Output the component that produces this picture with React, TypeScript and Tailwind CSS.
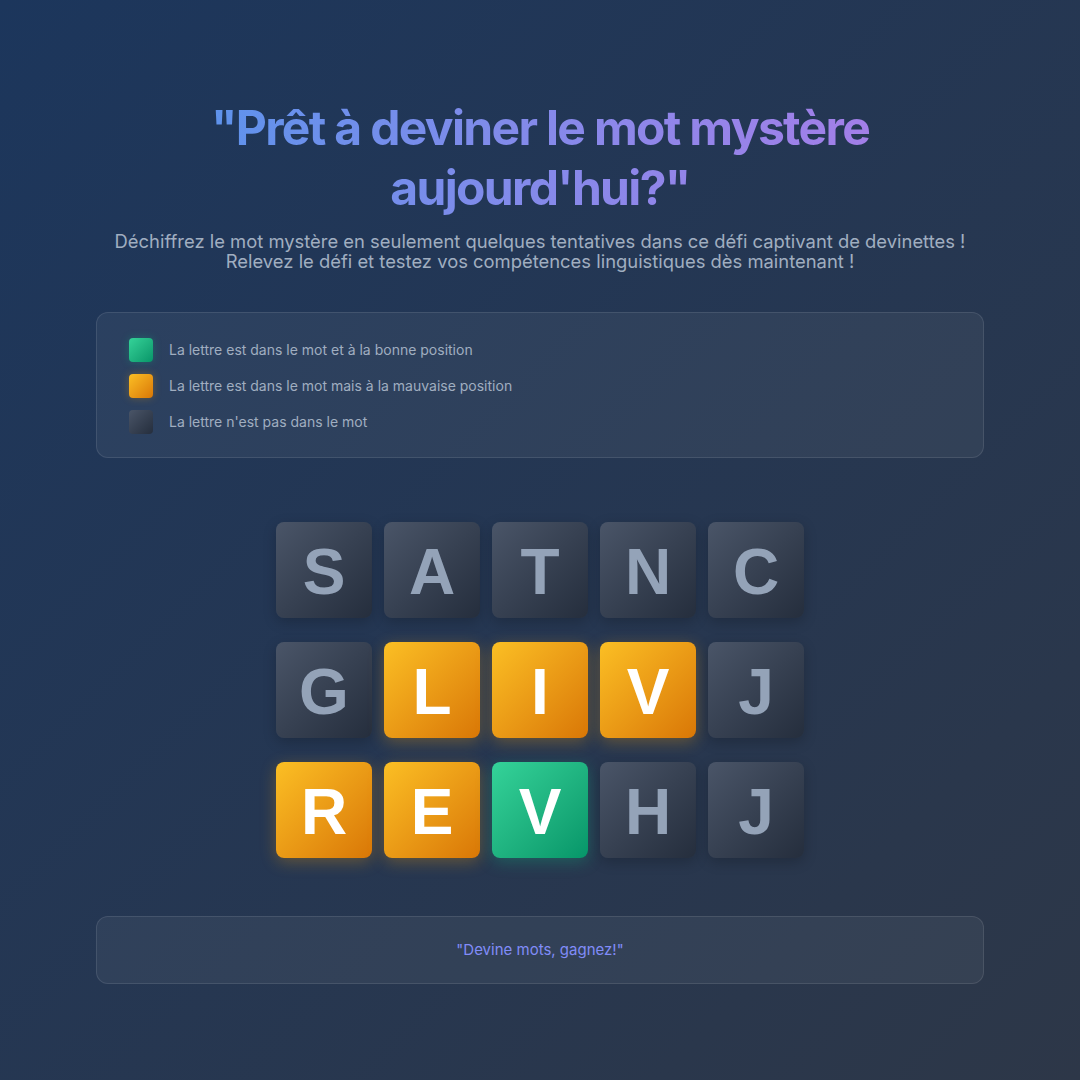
import React from "react";

type State = "correct" | "present" | "absent";

const ROWS: { letter: string; state: State }[][] = [
  [
    { letter: "S", state: "absent" },
    { letter: "A", state: "absent" },
    { letter: "T", state: "absent" },
    { letter: "N", state: "absent" },
    { letter: "C", state: "absent" },
  ],
  [
    { letter: "G", state: "absent" },
    { letter: "L", state: "present" },
    { letter: "I", state: "present" },
    { letter: "V", state: "present" },
    { letter: "J", state: "absent" },
  ],
  [
    { letter: "R", state: "present" },
    { letter: "E", state: "present" },
    { letter: "V", state: "correct" },
    { letter: "H", state: "absent" },
    { letter: "J", state: "absent" },
  ],
];

const tileStyles: Record<State, string> = {
  correct:
    "bg-gradient-to-br from-[#34d399] to-[#059669] text-white shadow-[0_4px_16px_rgba(16,185,129,0.3)]",
  present:
    "bg-gradient-to-br from-[#fbbf24] to-[#d97706] text-white shadow-[0_4px_16px_rgba(245,158,11,0.3)]",
  absent:
    "bg-gradient-to-br from-[#4a5568] to-[#252e3d] text-[#94a3b8] shadow-[0_4px_14px_rgba(0,0,0,0.2)]",
};

const LEGEND: { state: State; label: string }[] = [
  { state: "correct", label: "La lettre est dans le mot et à la bonne position" },
  { state: "present", label: "La lettre est dans le mot mais à la mauvaise position" },
  { state: "absent", label: "La lettre n'est pas dans le mot" },
];

const swatchStyles: Record<State, string> = {
  correct: "bg-gradient-to-br from-[#34d399] to-[#059669] shadow-[0_0_8px_rgba(16,185,129,0.3)]",
  present: "bg-gradient-to-br from-[#fbbf24] to-[#d97706] shadow-[0_0_8px_rgba(245,158,11,0.3)]",
  absent: "bg-gradient-to-br from-[#4a5568] to-[#252e3d]",
};

export default function App() {
  return (
    <div
      className="min-h-[1080px] w-full bg-gradient-to-br from-[#1c365c] to-[#2d3748] flex flex-col items-center pt-[98px]"
      style={{ fontFamily: "Inter, 'Noto Sans', sans-serif" }}
    >
      <div className="w-[888px] flex flex-col items-center">
        {/* Header */}
        <h1 className="text-center text-[48px] leading-[60px] font-bold tracking-[-0.035em] bg-gradient-to-r from-[#5b93ec] to-[#a47ee8] bg-clip-text text-transparent w-[700px]">
          "Prêt à deviner le mot mystère aujourd'hui?"
        </h1>
        <p className="mt-[13px] text-center text-[18.4px] leading-[20px] text-[#a0aec0]">
          Déchiffrez le mot mystère en seulement quelques tentatives dans ce défi captivant de devinettes !
          <br />
          Relevez le défi et testez vos compétences linguistiques dès maintenant !
        </p>

        {/* Legend */}
        <div className="mt-[41px] w-full rounded-xl border border-white/10 bg-white/5 px-8 pt-[25px] pb-[23px] flex flex-col gap-3">
          {LEGEND.map((item) => (
            <div key={item.state} className="flex items-center gap-4 h-6">
              <div className={`w-6 h-6 rounded-[4px] ${swatchStyles[item.state]}`} />
              <span className="text-sm text-[#a0aec0]">{item.label}</span>
            </div>
          ))}
        </div>

        {/* Board */}
        <div className="mt-16 flex flex-col gap-6">
          {ROWS.map((row, r) => (
            <div key={r} className="flex gap-3">
              {row.map((tile, i) => (
                <div
                  key={i}
                  className={`w-24 h-24 rounded-lg flex items-center justify-center text-[64px] font-bold pt-1 ${tileStyles[tile.state]}`}
                  style={{ fontFamily: "'Liberation Sans', Arial, sans-serif" }}
                >
                  {tile.letter}
                </div>
              ))}
            </div>
          ))}
        </div>

        {/* Footer */}
        <div className="mt-[58px] w-full h-[68px] rounded-xl border border-white/10 bg-white/5 flex items-center justify-center">
          <span className="text-[15px] text-[#818cf8]">"Devine mots, gagnez!"</span>
        </div>
      </div>
    </div>
  );
}
